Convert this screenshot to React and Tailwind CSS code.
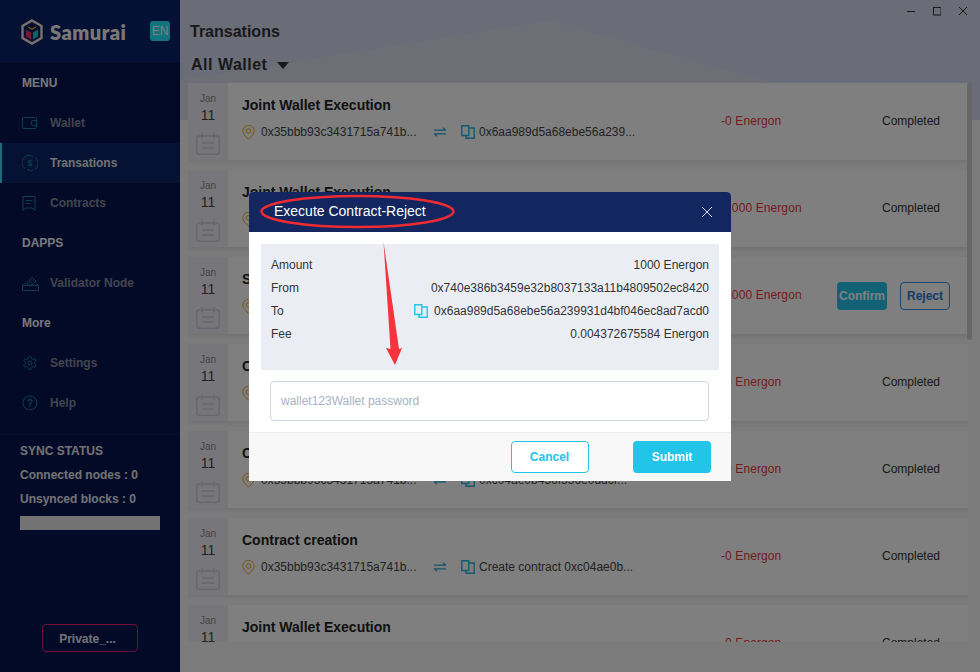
import React from "react";

const Wallet = () => (
  <svg width="16" height="14" viewBox="0 0 16 14" fill="none" stroke="currentColor" strokeWidth="1"><path d="M1.500 1.500h12a1 1 0 0 1 1 1v9a1 1 0 0 1-1 1h-12a1 1 0 0 1-1-1v-9.500a1 1 0 0 1 1-1z" /><path d="M14.500 4.500h-3a2.500 2.500 0 0 0 0 5h3" /></svg>
);
const Dollar = () => (
  <svg width="16" height="16" viewBox="0 0 16 16" fill="none" stroke="currentColor" strokeWidth="1"><path d="M3 13.500A7 7 0 0 1 11 1.700" /><path d="M13 2.500A7 7 0 0 1 5 14.300" strokeDasharray="14 1.500" /><text x="8" y="11" fontSize="9" textAnchor="middle" fill="currentColor" stroke="none" fontFamily="Liberation Sans">$</text></svg>
);
const Contract = () => (
  <svg width="14" height="15" viewBox="0 0 14 15" fill="none" stroke="currentColor" strokeWidth="1"><path d="M1 .5h12v14l-3-2.500H4l-3 2.500z" /><path d="M3.500 4.500h7M3.500 7.500h5" /></svg>
);
const Ballot = () => (
  <svg width="17" height="15" viewBox="0 0 17 15" fill="none" stroke="currentColor" strokeWidth="1"><path d="M.5 9.500v5h16v-5l-3-2.500M.5 9.500l3-2.500M.5 9.500h16" /><path d="M5 7l5-5.500 4 3.500-4 4H6z" /><path d="M7 5.500l1.500 1.500 2.500-2.500" /></svg>
);
const Gear = () => (
  <svg width="16" height="16" viewBox="0 0 24 24" fill="none" stroke="currentColor" strokeWidth="1.500"><path d="M12.220 2h-.440a2 2 0 0 0-2 2v.180a2 2 0 0 1-1 1.730l-.430.250a2 2 0 0 1-2 0l-.150-.080a2 2 0 0 0-2.730.730l-.220.380a2 2 0 0 0 .730 2.730l.150.100a2 2 0 0 1 1 1.720v.510a2 2 0 0 1-1 1.740l-.150.090a2 2 0 0 0-.730 2.730l.220.380a2 2 0 0 0 2.730.730l.150-.080a2 2 0 0 1 2 0l.430.250a2 2 0 0 1 1 1.730V20a2 2 0 0 0 2 2h.440a2 2 0 0 0 2-2v-.180a2 2 0 0 1 1-1.730l.430-.250a2 2 0 0 1 2 0l.150.080a2 2 0 0 0 2.730-.730l.220-.390a2 2 0 0 0-.730-2.730l-.150-.080a2 2 0 0 1-1-1.740v-.500a2 2 0 0 1 1-1.740l.150-.090a2 2 0 0 0 .730-2.730l-.220-.380a2 2 0 0 0-2.730-.730l-.150.080a2 2 0 0 1-2 0l-.430-.250a2 2 0 0 1-1-1.730V4a2 2 0 0 0-2-2z" /><circle cx="12" cy="12" r="3" /></svg>
);
const Help = () => (
  <svg width="16" height="16" viewBox="0 0 16 16" fill="none" stroke="currentColor" strokeWidth="1"><circle cx="8" cy="8" r="7" /><text x="8" y="11.500" fontSize="10" textAnchor="middle" fill="currentColor" stroke="none" fontFamily="Liberation Sans">?</text></svg>
);
const Logo = () => (
  <svg width="22" height="26" viewBox="0 0 22 26" fill="none">
    <path d="M11 1.500 20.500 7v12L11 24.500 1.500 19V7z" stroke="#f1e4d4" strokeWidth="2.400" />
    <path d="M11 4.500 18 8.500 11 12.500 4 8.500z" fill="#0d1b4d" />
    <path d="M7.500 7.500 11 9.500l3.500-2 1 .8L11 11 6.500 8.300z" fill="#f6b73c" />
    <path d="M5 10.500l5 3v7l-5-3z" fill="#f0315c" />
    <path d="M17 10.500l-5 3v7l5-3z" fill="#22c4c8" />
  </svg>
);
const Calendar = () => (
  <svg width="24" height="22" viewBox="0 0 24 22" fill="none" stroke="#cfd1d8" strokeWidth="1.600"><rect x=".8" y="3" width="22.400" height="18.200" rx="2.500" /><path d="M6 .5v5M18 .5v5M10 2.500h4M6 10h12M6 15h12" /></svg>
);
const Pin = () => (
  <svg width="13" height="15" viewBox="0 0 13 15" fill="none" stroke="#f0a82e" strokeWidth="1"><path d="M6.500 14.300C3 10.800.8 8.500.8 6a5.700 5.700 0 0 1 11.400 0c0 2.500-2.200 4.800-5.700 8.300z" /><circle cx="6.500" cy="6" r="2.300" /></svg>
);
const Copy = ({ c = "#22b8e0" }) => (
  <svg width="14" height="14" viewBox="0 0 14 14" fill="none" stroke={c} strokeWidth="1.400"><path d="M.8.800h7v9.700h-7z" /><path d="M7.800 3h5.400v10.200H5V10.500" /></svg>
);
const Swap = () => (
  <svg width="12" height="10" viewBox="0 0 12 10" fill="none" stroke="#22a8d0" strokeWidth="1.200"><path d="M0 3.200h11.500L9 .7M12 6.800H.5L3 9.300" /></svg>
);

const NavHead = ({ children }) => (
  <div className="h-10 flex items-center pl-[22px] text-[12px] font-bold text-[#f0f0f8]">{children}</div>
);
const NavItem = ({ icon, label, active }) => (
  <div className={`h-10 flex items-center text-[12px] font-bold ${active ? "bg-[#0c2566] border-l-2 border-[#2ae0f8] pl-5 text-[#dfe2ea]" : "pl-[22px] text-[#85899b]"}`}>
    <span className="w-7 flex justify-start text-[#1a7f9f]">{icon}</span>
    <span>{label}</span>
  </div>
);

const A = "0x35bbb93c3431715a741b...";
const rows = [
  { t: "Joint Wallet Execution", to: "0x6aa989d5a68ebe56a239...", a: "-0 Energon" },
  { t: "Joint Wallet Execution", to: "0x6aa989d5a68ebe56a239...", a: "-1000 Energon" },
  { t: "Submit Execution", to: "0x6aa989d5a68ebe56a239...", a: "-1000 Energon", btn: true },
  { t: "Contract creation", to: "Create contract 0xc04ae0b...", a: "-0 Energon" },
  { t: "Contract creation", to: "0xc04ae0b436f536e0ddcf...", a: "-0 Energon" },
  { t: "Contract creation", to: "Create contract 0xc04ae0b...", a: "-0 Energon" },
  { t: "Joint Wallet Execution", to: "0x6aa989d5a68ebe56a239...", a: "-0 Energon" },
];

const Row = ({ r }) => (
  <div className="h-[77px] shrink-0 flex bg-white shadow-[0_2px_4px_rgba(0,0,0,0.08)]">
    <div className="w-10 bg-[#eeeff6] flex flex-col items-center pt-[10px]">
      <div className="text-[10px] leading-3 text-[#888]">Jan</div>
      <div className="text-[14px] leading-4 mt-[2px] text-[#444]">11</div>
      <div className="mt-[10px]"><Calendar /></div>
    </div>
    <div className="w-[493px] pl-[14px] pt-[14px]">
      <div className="text-[14px] leading-4 font-bold text-[#222]">{r.t}</div>
      <div className="flex items-center mt-[11px] text-[12px] leading-4 text-[#444]">
        <Pin />
        <span className="ml-[6px] w-[157px] whitespace-nowrap">{A}</span>
        <span className="ml-4"><Swap /></span>
        <span className="ml-[15px]"><Copy /></span>
        <span className="ml-[4px] whitespace-nowrap">{r.to}</span>
      </div>
    </div>
    <div className="w-[161px] pt-[30px] text-[12px] leading-4 tracking-[0.1px] text-[#e8353b] whitespace-nowrap">{r.a}</div>
    {r.btn ? (
      <div className="flex items-center gap-[13px] -ml-[45px]">
        <div className="w-[50px] h-7 rounded bg-[#22c4e8] flex items-center justify-center text-[12px] font-bold text-white">Confirm</div>
        <div className="w-[50px] h-7 rounded border border-[#3a8ee0] flex items-center justify-center text-[12px] font-bold text-[#2a78d0]">Reject</div>
      </div>
    ) : (
      <div className="pt-[30px] text-[12px] leading-4 text-[#333]">Completed</div>
    )}
  </div>
);

export default function App() {
  return (
    <div className="relative w-[980px] h-[672px] overflow-hidden flex bg-[#f6f6f6] font-['Liberation_Sans',Arial,sans-serif]">
      <aside className="w-[180px] shrink-0 bg-[#061550] flex flex-col">
        <div className="h-[63px] bg-[#0a2268] flex items-center pl-[21px] relative">
          <Logo />
          <span className="ml-[7px] font-['Lato',sans-serif] font-extrabold text-[20px] tracking-[0.5px] text-[#f4f0ea]">Samurai</span>
          <span className="absolute left-[150px] top-[21px] w-5 h-5 rounded-[3px] bg-[#25e8ff] flex items-center justify-center text-[12px] text-white">EN</span>
        </div>
        <NavHead>MENU</NavHead>
        <NavItem icon={<Wallet />} label="Wallet" />
        <NavItem icon={<Dollar />} label="Transations" active />
        <NavItem icon={<Contract />} label="Contracts" />
        <NavHead>DAPPS</NavHead>
        <NavItem icon={<Ballot />} label="Validator Node" />
        <NavHead>More</NavHead>
        <NavItem icon={<Gear />} label="Settings" />
        <NavItem icon={<Help />} label="Help" />
        <div className="mt-[11px] border-t border-[#0c2566] pl-5 pt-2 text-[12px] font-bold leading-4 text-[#e4e5ec]">
          <div>SYNC STATUS</div>
          <div className="mt-2">Connected nodes : 0</div>
          <div className="mt-2">Unsynced blocks : 0</div>
          <div className="mt-[9px] w-[140px] h-[14px] bg-[#e6e6e6]" />
        </div>
        <div className="mt-auto mb-5 mx-auto w-24 h-7 rounded border border-[#e02070] flex items-center justify-center pr-[5px] pt-px text-[12px] font-bold text-[#e4e5ec]">Private_...</div>
      </aside>

      <main className="relative flex-1 flex flex-col min-w-0">
        <svg className="absolute left-0 top-0" width="800" height="120" viewBox="0 0 800 120">
          <rect width="800" height="120" fill="#d5d8ef" />
          <path d="M0 80 L370 21 L587 82 L800 120 H0z" fill="#dcddef" />
        </svg>
        <div className="relative h-[63px] pl-[10px] pt-[23px] text-[16px] leading-[18px] font-bold text-[#333]">Transations</div>
        <div className="absolute right-[13px] top-[6px] flex items-center gap-[18px] text-[#333]">
          <svg width="8" height="10" viewBox="0 0 8 10" stroke="currentColor"><path d="M0 5.500h8" /></svg>
          <svg width="8" height="10" viewBox="0 0 8 10" fill="none" stroke="currentColor"><rect x=".5" y="1.500" width="7.500" height="7.500" /></svg>
          <svg width="8" height="10" viewBox="0 0 8 10" stroke="currentColor"><path d="M0 1l8 8M8 1L0 9" /></svg>
        </div>
        <div className="absolute left-[11px] top-[56px] flex items-center text-[16px] leading-[18px] font-bold tracking-[0.5px] text-[#333]">
          All Wallet
          <svg className="ml-[10px]" width="12" height="7" viewBox="0 0 12 7" fill="#333"><path d="M0 0h12L6 7z" /></svg>
        </div>
        <div className="relative mt-5 ml-2 w-[780px] h-[559px] overflow-hidden flex flex-col gap-[10px]">
          {rows.map((r, i) => <Row key={i} r={r} />)}
        </div>
        <div className="absolute left-[787px] top-[83px] w-[5px] h-[257px] rounded-sm bg-[#cdcdcd]" />
      </main>

      <div className="absolute inset-0 bg-black/50 flex items-center justify-center">
        <div className="relative w-[482px] h-[289px] bg-white rounded-t flex flex-col">
          <div className="h-10 rounded-t bg-[#14265f] flex items-center justify-between pl-[25px] pr-[19px] text-[14px] text-white">
            <span>Execute Contract-Reject</span>
            <svg width="10" height="10" viewBox="0 0 10 10" stroke="#d8dcea"><path d="M0 0l10 10M10 0L0 10" /></svg>
          </div>
          <div className="mt-3 mx-3 h-[126px] bg-[#eaedf4] px-[10px] pt-[10px] text-[12px] text-[#333]">
            <div className="h-[23px] flex items-center justify-between"><span>Amount</span><span>1000 Energon</span></div>
            <div className="h-[23px] flex items-center justify-between"><span>From</span><span>0x740e386b3459e32b8037133a11b4809502ec8420</span></div>
            <div className="h-[23px] flex items-center justify-between"><span>To</span><span className="flex items-center gap-[6px]"><Copy c="#22c4e8" />0x6aa989d5a68ebe56a239931d4bf046ec8ad7acd0</span></div>
            <div className="h-[23px] flex items-center justify-between"><span>Fee</span><span>0.004372675584 Energon</span></div>
          </div>
          <div className="mt-[11px] ml-[21px] w-[439px] h-10 rounded border border-[#cdd6e5] flex items-center pl-[10px] text-[12px] text-[#a8b2c4]">wallet123Wallet password</div>
          <div className="mt-[11px] flex-1 bg-[#f8f8f8] border-t border-[#eeeeee] flex items-start justify-end gap-[44px] pr-5 pt-2">
            <div className="w-[78px] h-8 pt-px pr-px rounded border border-[#22c4e8] bg-white flex items-center justify-center text-[12px] font-bold text-[#22c4e8]">Cancel</div>
            <div className="w-[78px] h-8 pt-px rounded bg-[#22c4e8] flex items-center justify-center text-[12px] font-bold text-white">Submit</div>
          </div>
          <svg className="absolute left-0 top-0 pointer-events-none" width="482" height="289" viewBox="0 0 482 289" fill="none">
            <ellipse cx="108.500" cy="19.500" rx="96" ry="15.500" stroke="#ee2a33" strokeWidth="2.500" />
            <path d="M134.500 50 L150 157 L153 156 L146 173 L137 156 L141.500 157z" fill="#f4333c" />
          </svg>
        </div>
      </div>
    </div>
  );
}
